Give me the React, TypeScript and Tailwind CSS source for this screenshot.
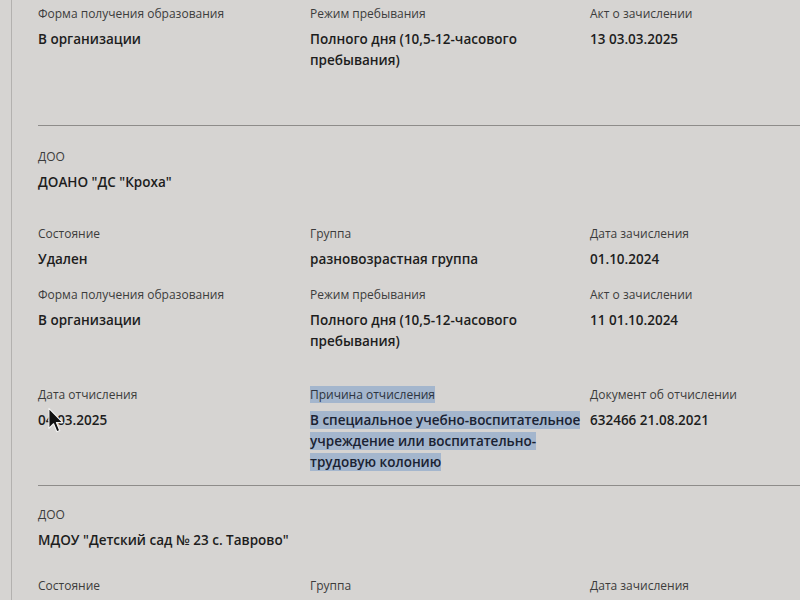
import type { ReactNode } from 'react';

const Label = ({ children, selected }: { children: ReactNode; selected?: boolean }) => (
  <div className="text-[12px] leading-[18px] text-[#3c3c3c]">
    {selected ? <span className="bg-[#a4b6cd] text-[#2c3440]">{children}</span> : children}
  </div>
);

const Value = ({ children, selected }: { children: ReactNode; selected?: boolean }) => (
  <div className="mt-[6px] text-[13.5px] leading-[21px] font-semibold text-[#1d1d1d]">
    {selected ? (
      <span className="bg-[#a4b6cd] text-[#1a2232] box-decoration-clone">{children}</span>
    ) : (
      children
    )}
  </div>
);

const Field = ({ label, value, selected }: { label: string; value?: ReactNode; selected?: boolean }) => (
  <div>
    <Label selected={selected}>{label}</Label>
    {value && <Value selected={selected}>{value}</Value>}
  </div>
);

const Row = ({ children, className = '' }: { children: ReactNode; className?: string }) => (
  <div className={`grid grid-cols-[272px_280px_1fr] ${className}`}>{children}</div>
);

const Cursor = () => (
  <svg className="absolute left-[47px] top-[407px]" width="18" height="27" viewBox="0 0 12 19">
    <path
      d="M1 1 L1 15 L4.3 11.8 L6.6 17.4 L8.6 16.6 L6.3 11 L10.8 11 Z"
      fill="#111"
      stroke="#f2f2f2"
      strokeWidth="0.8"
      strokeLinejoin="round"
    />
  </svg>
);

export default function App() {
  return (
    <div className="relative h-[600px] w-[800px] overflow-hidden bg-[#d6d4d2] font-['Open_Sans',sans-serif]">
      <div className="ml-[11px] h-full border-l border-[#b3b1af]">
        {/* tail of the current enrolment */}
        <section className="ml-[26px] border-b border-[#8e8c8a] pt-[5px] pb-[54px]">
          <Row>
            <Field label="Форма получения образования" value="В организации" />
            <Field label="Режим пребывания" value="Полного дня (10,5-12-часового пребывания)" />
            <Field label="Акт о зачислении" value="13 03.03.2025" />
          </Row>
        </section>

        <section className="ml-[26px] border-b border-[#8e8c8a] pt-[22px] pb-[12px]">
          <Field label="ДОО" value='ДОАНО "ДС "Кроха"' />
          <Row className="mt-8">
            <Field label="Состояние" value="Удален" />
            <Field label="Группа" value="разновозрастная группа" />
            <Field label="Дата зачисления" value="01.10.2024" />
          </Row>
          <Row className="mt-[16px]">
            <Field label="Форма получения образования" value="В организации" />
            <Field label="Режим пребывания" value="Полного дня (10,5-12-часового пребывания)" />
            <Field label="Акт о зачислении" value="11 01.10.2024" />
          </Row>
          <Row className="mt-[34px]">
            <Field label="Дата отчисления" value="04.03.2025" />
            <Field
              label="Причина отчисления"
              value="В специальное учебно-воспитательное учреждение или воспитательно-трудовую колонию"
              selected
            />
            <Field label="Документ об отчислении" value="632466 21.08.2021" />
          </Row>
        </section>

        <section className="ml-[26px] pt-[20px]">
          <Field label="ДОО" value='МДОУ "Детский сад № 23 с. Таврово"' />
          <Row className="mt-[26px]">
            <Field label="Состояние" />
            <Field label="Группа" />
            <Field label="Дата зачисления" />
          </Row>
        </section>
      </div>
      <Cursor />
    </div>
  );
}
